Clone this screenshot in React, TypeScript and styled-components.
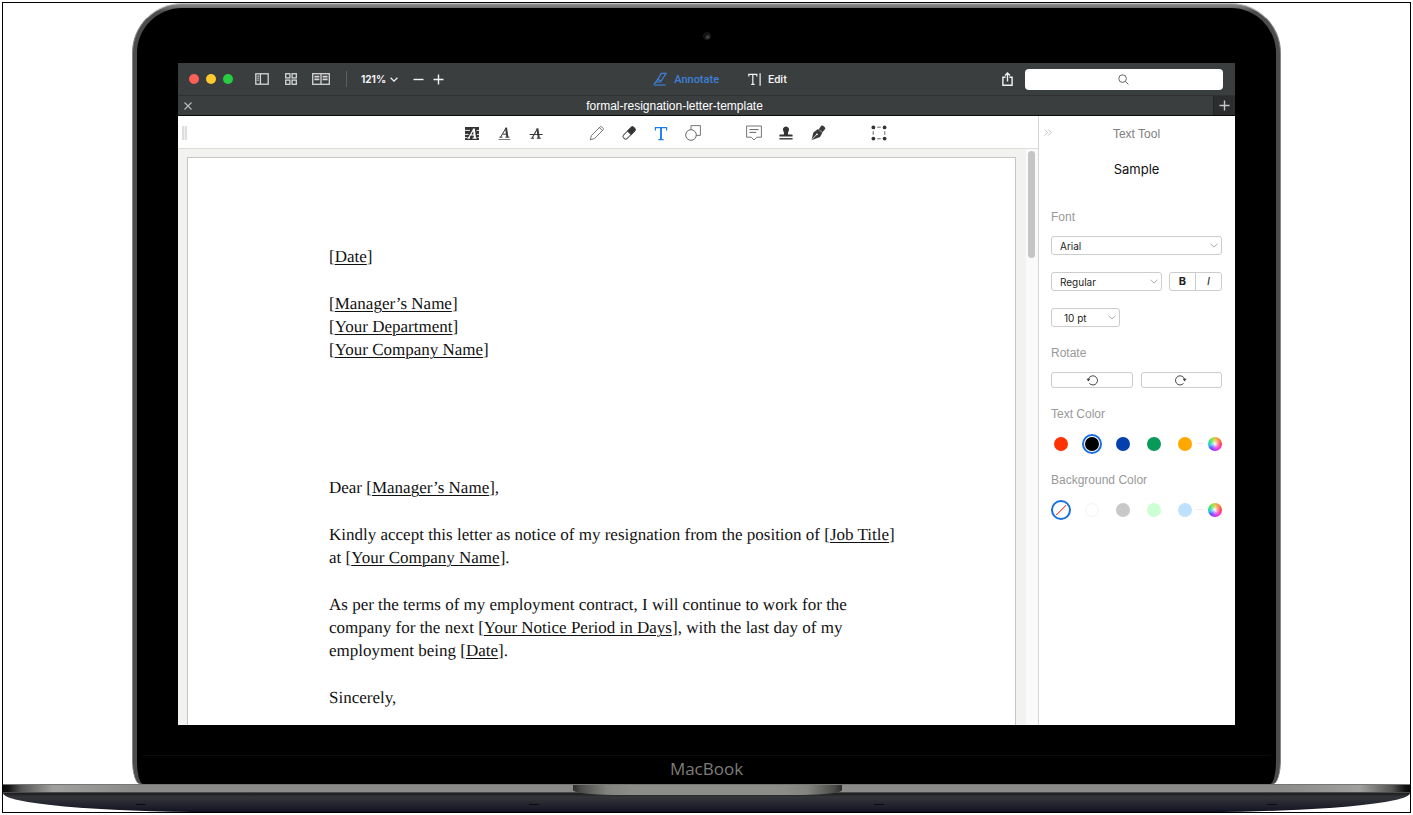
import React from "react";
import styled, { createGlobalStyle, css } from "styled-components";

const GlobalStyle = createGlobalStyle`
  *, *::before, *::after { box-sizing: border-box; }
  body {
    margin: 0;
    background: #fff;
    font-family: Inter, "Liberation Sans", sans-serif;
    font-size: 11px;
    color: #222;
  }
  button, select, input { font: inherit; color: inherit; margin: 0; }
  svg { display: block; }
`;

const Stage = styled.div`
  display: flex;
  flex-direction: column;
  min-height: 100vh;
  padding: 2px 2px 3px;
`;

const Frame = styled.div`
  flex: 1;
  display: flex;
  flex-direction: column;
  border: 1px solid #000;
`;

/* Laptop shell */

const Lid = styled.div`
  flex: 1;
  display: flex;
  margin: 0 129px;
  padding: 4px;
  border: 1px solid #858585;
  border-top-color: #c4c4c4;
  border-bottom: 0;
  border-radius: 50px 50px 8px 8px / 50px 50px 24px 24px;
  padding-bottom: 0;
  background: linear-gradient(#8c8c8c, #4c4c4c 8px);
`;

const Bezel = styled.div`
  flex: 1;
  display: flex;
  flex-direction: column;
  min-width: 0;
  padding: 0 41px;
  border-radius: 45px 45px 6px 6px / 45px 45px 22px 22px;
  background: #000;
`;

const CameraStrip = styled.div`
  display: flex;
  justify-content: center;
  align-items: center;
  height: 55px;
`;

const Camera = styled.span`
  width: 8px;
  height: 8px;
  border: 1px solid #1c1c1c;
  border-radius: 50%;
  background: radial-gradient(circle at 65% 70%, #555, #0c0c0c 60%);
`;

const Chin = styled.div`
  display: flex;
  flex-direction: column;
  height: 59px;
  padding-top: 30px;
  margin: 0 -36px;
`;

const Brand = styled.div`
  flex: 1;
  border-top: 1px solid #0b0b0b;
  text-align: center;
  font-family: "Open Sans", sans-serif;
  font-size: 17px;
  line-height: 26px;
  color: #7d7d7a;
`;

const Base = styled.div`
  position: relative;
  height: 28px;
`;

const Deck = styled.div`
  height: 9px;
  border-top: 1px solid #777775;
  border-bottom: 1px solid #4a4a4a;
  background: linear-gradient(
    90deg,
    #0a0a0a,
    #111 5px,
    #555 18px,
    #a0a09e 50px,
    #8b8b89 130px,
    #8b8b89 calc(100% - 130px),
    #a0a09e calc(100% - 50px),
    #555 calc(100% - 18px),
    #111 calc(100% - 5px),
    #0a0a0a
  );
`;

const Underside = styled.div`
  display: flex;
  justify-content: space-between;
  align-items: flex-end;
  height: 19px;
  padding: 0 133px 7px;
  border-radius: 0 0 210px 210px / 0 0 19px 19px;
  background: linear-gradient(#1c1c1c, #34353a 4px, #1a1a28 16px, #10101e);
`;

const Foot = styled.i<{ $inner?: "left" | "right" }>`
  width: 10px;
  height: 1px;
  background: #0a0a10;
  ${(p) => p.$inner && `margin-${p.$inner}: 48px;`}
`;

const Notch = styled.div`
  position: absolute;
  top: 0;
  left: 50%;
  width: 269px;
  height: 11px;
  margin-left: -134px;
  border-top: 1px solid #777775;
  border-radius: 0 0 40px 40px / 0 0 5px 5px;
  background: linear-gradient(
    90deg,
    #2c2c2c,
    #4c4c4a 8px,
    #82827e 34px,
    #8c8c88 60px,
    #8c8c88 calc(100% - 60px),
    #82827e calc(100% - 34px),
    #4c4c4a calc(100% - 8px),
    #2c2c2c
  );
`;

/* Application window */

const AppWindow = styled.div`
  flex: 1;
  display: flex;
  flex-direction: column;
  min-width: 0;
  background: #fff;
`;

const TitleBar = styled.header`
  display: grid;
  grid-template-columns: 1fr auto 1fr;
  align-items: center;
  height: 33px;
  padding: 0 12px 0 11px;
  border-bottom: 1px solid #2f3132;
  background: #3b3e3f;
  color: #f2f2f2;
`;

const Cluster = styled.div<{ $gap: number; $end?: boolean }>`
  display: flex;
  align-items: center;
  justify-content: ${(p) => (p.$end ? "flex-end" : "flex-start")};
  gap: ${(p) => p.$gap}px;
`;

const IconButton = styled.button<{ $w?: number; $h?: number }>`
  display: flex;
  align-items: center;
  justify-content: center;
  flex: none;
  width: ${(p) => p.$w ?? 16}px;
  height: ${(p) => p.$h ?? 16}px;
  padding: 0;
  border: 0;
  background: none;
  color: inherit;
`;

const TrafficLight = styled.button<{ $color: string }>`
  width: 10px;
  height: 10px;
  padding: 0;
  border: 0;
  border-radius: 50%;
  background: ${(p) => p.$color};
`;

const ViewButtons = styled(Cluster)`
  margin-left: 21px;
  color: #d6d6d6;
`;

const Divider = styled.span`
  width: 1px;
  height: 16px;
  margin-left: 16px;
  background: #5c5f60;
`;

const ZoomButton = styled.button`
  display: flex;
  align-items: center;
  gap: 4px;
  margin-left: 14px;
  padding: 0;
  border: 0;
  background: none;
  font-size: 10px;
  font-weight: 700;
`;

const Stepper = styled(Cluster)`
  margin-left: 14px;
`;

const Modes = styled.nav`
  display: flex;
  gap: 29px;
  padding-left: 28px;
`;

const ModeButton = styled.button<{ $active?: boolean }>`
  display: flex;
  align-items: center;
  gap: 7px;
  padding: 0;
  border: 0;
  background: none;
  font-family: Roboto, sans-serif;
  font-size: 11px;
  font-weight: 500;
  color: ${(p) => (p.$active ? "#3d80d8" : "#f4f4f4")};
`;

const Search = styled.label`
  position: relative;
  display: block;
  width: 198px;
  height: 21px;

  svg {
    position: absolute;
    top: 5px;
    left: 93px;
  }
`;

const SearchInput = styled.input`
  display: block;
  width: 100%;
  height: 100%;
  padding: 0 8px;
  border: 0;
  border-radius: 4px;
  background: #fff;
  color: #222;
`;

const TabBar = styled.div`
  display: flex;
  height: 20px;
  border-bottom: 1px solid #0c0c0c;
  background: #3b3e3f;
  color: #fff;
`;

const CloseTab = styled(IconButton)`
  color: #bdbdbd;
`;

const TabTitle = styled.div`
  flex: 1;
  padding-right: 62px;
  text-align: center;
  font-family: "Liberation Sans", Arial, sans-serif;
  font-size: 12px;
  line-height: 21px;
`;

const NewTab = styled(IconButton)`
  border-left: 1px solid #232525;
  background: #2b2d2e;
  color: #c8c8c8;
`;

const Body = styled.div`
  flex: 1;
  display: flex;
  min-height: 0;
`;

const Workspace = styled.main`
  flex: 1;
  display: flex;
  flex-direction: column;
  min-width: 0;
`;

const Toolbar = styled.div`
  display: flex;
  align-items: center;
  height: 33px;
  padding: 2px 0 0 4px;
  border-bottom: 1px solid #dcdcdb;
  background: #fff;
`;

const Grip = styled.span`
  width: 5px;
  height: 14px;
  border: solid #dedede;
  border-width: 0 2px;
  background: #f0f0f0;
`;

const Tools = styled.div`
  flex: 1;
  display: flex;
  justify-content: center;
  gap: 45px;
  padding-left: 126px;
  color: #3a3a3a;
`;

const Canvas = styled.div`
  flex: 1;
  display: flex;
  background: #f2f2f1;
`;

const Paper = styled.article`
  flex: 1;
  margin: 8px 10px 0 9px;
  padding: 87px 100px 16px 141px;
  border: 1px solid #c6c6c5;
  border-bottom: 0;
  background: #fff;
  font-family: "Liberation Serif", "Times New Roman", serif;
  font-size: 17px;
  line-height: 23px;
  text-rendering: geometricPrecision;
  color: #111;
`;

const Para = styled.p<{ $before?: number }>`
  margin: ${(p) => p.$before ?? 24}px 0 0;

  u {
    text-underline-offset: 2px;
    text-decoration-thickness: 1px;
  }
`;

const ScrollTrack = styled.div`
  width: 12px;
  padding: 2px 3px 0 2px;
  background: #fafafa;
`;

const ScrollThumb = styled.div`
  height: 107px;
  border-radius: 4px;
  background: #c5c5c5;
`;

/* Inspector */

const Panel = styled.aside`
  width: 197px;
  padding: 0 13px 16px 12px;
  border-left: 1px solid #d6d6d6;
  background: #fff;
`;

const PanelHeader = styled.div`
  display: grid;
  grid-template-columns: 16px 1fr 16px;
  align-items: center;
  height: 36px;
  color: #808080;
`;

const PanelTitle = styled.h2`
  margin: 0;
  text-align: center;
  font-family: "Liberation Sans", Arial, sans-serif;
  font-size: 12px;
  font-weight: 400;
`;

const Collapse = styled(IconButton)`
  margin: 0 0 4px -11px;
  color: #bdbdbd;
`;

const Sample = styled.div`
  margin-bottom: 23px;
  text-align: center;
  font-size: 13px;
  line-height: 34px;
  color: #111;
`;

const Section = styled.fieldset`
  min-width: 0;
  margin: 0 0 18px;
  padding: 0;
  border: 0;
`;

const SectionLabel = styled.legend`
  margin-bottom: 11px;
  padding: 0;
  font-family: "Liberation Sans", Arial, sans-serif;
  font-size: 12px;
  line-height: 16px;
  color: #999;
`;

const Row = styled.div`
  display: flex;
  gap: 7px;

  & + & {
    margin-top: 17px;
  }
`;

const SelectWrap = styled.label<{ $w?: number }>`
  position: relative;
  ${(p) => (p.$w ? css`width: ${p.$w}px;` : css`flex: 1;`)}

  svg {
    position: absolute;
    top: 7px;
    right: 4px;
    color: #a8a8a8;
    pointer-events: none;
  }
`;

const Select = styled.select<{ $indent?: number }>`
  display: block;
  width: 100%;
  height: 19px;
  padding: 0 16px 0 ${(p) => p.$indent ?? 8}px;
  border: 1px solid #cccccc;
  border-radius: 3px;
  background: #fff;
  appearance: none;
  font-size: 10px;
  color: #222;
`;

const StyleGroup = styled.div`
  display: flex;
  width: 53px;
  height: 19px;
  border: 1px solid #cccccc;
  border-radius: 3px;
`;

const StyleButton = styled.button<{ $italic?: boolean }>`
  flex: 1;
  padding: 0;
  border: 0;
  border-left: ${(p) => (p.$italic ? "1px solid #cccccc" : "0")};
  background: none;
  font-size: 11px;
  line-height: 17px;
  font-weight: ${(p) => (p.$italic ? 400 : 700)};
  font-style: ${(p) => (p.$italic ? "italic" : "normal")};
`;

const RotateRow = styled(Row)`
  gap: 8px;
`;

const RotateButton = styled.button`
  flex: 1;
  display: flex;
  justify-content: center;
  align-items: center;
  height: 16px;
  padding: 0;
  border: 1px solid #cccccc;
  border-radius: 3px;
  background: #fff;
  color: #444;
`;

const Swatches = styled.div`
  display: flex;
  align-items: center;
  gap: 11px;
  height: 21px;
`;

const Swatch = styled.input<{ $color: string; $outlined?: boolean }>`
  flex: none;
  width: 20px;
  height: 20px;
  border: 3px solid transparent;
  border-radius: 50%;
  background: ${(p) => p.$color} padding-box;
  appearance: none;
  box-shadow: ${(p) => (p.$outlined ? "inset 0 0 0 1px #f4f4f4" : "none")};

  &:checked {
    border: 2px solid #1a6fe0;
    background: ${(p) => p.$color} content-box;
    padding: 1px;
  }
`;

const NoColor = styled(Swatch)`
  &:checked {
    background: linear-gradient(135deg, transparent 47%, #f0503c 48%, #f0503c 53%, transparent 54%) content-box;
  }
`;

const Wheel = styled.button`
  position: relative;
  width: 14px;
  height: 14px;
  margin-left: auto;
  padding: 0;
  border: 0;
  border-radius: 50%;
  background:
    radial-gradient(circle, #fff, rgba(255, 255, 255, 0.3) 35%, transparent 60%),
    conic-gradient(#e8c03c, #ff8040 12%, #ff4050 25%, #ff30c0 37%, #c030ff 50%, #5050ff 62%, #30c0f0 72%, #30e080 82%, #80e83c 92%, #e8c03c);

  &::before {
    content: "";
    position: absolute;
    top: 6px;
    right: 18px;
    width: 8px;
    height: 1px;
    background: #f7ece9;
  }
`;

/* Icons */

type IconProps = { w: number; h: number; sw?: number; children: React.ReactNode };

const Icon = ({ w, h, sw = 1, children }: IconProps) => (
  <svg width={w} height={h} viewBox={`0 0 ${w} ${h}`} fill="none" stroke="currentColor" strokeWidth={sw} aria-hidden="true">
    {children}
  </svg>
);

const SidebarIcon = () => (
  <Icon w={14} h={12} sw={1.3}>
    <rect x="0.8" y="0.8" width="12.4" height="10.4" />
    <path d="M5.4 1v10" />
    <path d="M2.2 3.2h1.8M2.2 5.2h1.8M2.2 7.2h1.8" strokeWidth="1" />
  </Icon>
);

const GridIcon = () => (
  <Icon w={12} h={12} sw={1.3}>
    <rect x="0.7" y="0.7" width="4.2" height="4.2" />
    <rect x="7.1" y="0.7" width="4.2" height="4.2" />
    <rect x="0.7" y="7.1" width="4.2" height="4.2" />
    <rect x="7.1" y="7.1" width="4.2" height="4.2" />
  </Icon>
);

const BookIcon = () => (
  <Icon w={18} h={12} sw={1.3}>
    <rect x="0.7" y="0.7" width="16.6" height="10.6" />
    <path d="M9 1v10" />
    <path d="M2.4 3.4h5M2.4 5h5M2.4 6.6h5M10.6 3.4h5M10.6 5h5M10.6 6.6h5" strokeWidth="1.1" />
  </Icon>
);

const Chevron = ({ sw = 1 }: { sw?: number }) => (
  <Icon w={8} h={5} sw={sw}>
    <path d="M0.6 0.8 4 4.1 7.4 0.8" />
  </Icon>
);

const PlusIcon = () => (
  <Icon w={11} h={11} sw={1.4}>
    <path d="M5.5 0.5v10M0.5 5.5h10" />
  </Icon>
);

const MinusIcon = () => (
  <Icon w={11} h={11} sw={1.4}>
    <path d="M0.5 5.5h10" />
  </Icon>
);

const CloseIcon = () => (
  <Icon w={8} h={8} sw={1.1}>
    <path d="M0.5 0.5l7 7M7.5 0.5l-7 7" />
  </Icon>
);

const AnnotateIcon = () => (
  <Icon w={14} h={14} sw={1.2}>
    <path d="M8.400 1.400h4.600L7.600 10H3z" />
    <path d="M4.400 7.400l3.800 1.600M3 10 1 12" />
    <path d="M0.6 13h12" />
  </Icon>
);

const EditIcon = () => (
  <Icon w={13} h={13} sw={1.2}>
    <path d="M0.8 3.4V1.4h8v2M4.8 1.4v10M3.2 11.4h3.4M12.1 0.2v12.6" />
  </Icon>
);

const ShareIcon = () => (
  <Icon w={11} h={14} sw={1.4}>
    <path d="M3.6 5.2H0.9v8h9.200v-8H7.400" />
    <path d="M5.5 9.600V1.200M3 3.600l2.500-2.500L8 3.600" />
  </Icon>
);

const SearchIcon = () => (
  <Icon w={11} h={11}>
    <circle cx="4.6" cy="4.6" r="3.8" stroke="#666" />
    <path d="M7.4 7.4l3 3" stroke="#666" />
  </Icon>
);

const HighlightIcon = () => (
  <Icon w={14} h={14}>
    <rect width="14" height="13" y="1" fill="#333" stroke="none" />
    <path d="M0 4.4h5M0 8.400h3.600M11.600 4.400H14M12 8.400h2M0 11.600h2M12.600 11.600H14" stroke="#fff" strokeWidth="0.900" />
    <path d="M3.400 12.200 8.800 3M2.400 12.200h2.600M7.600 12.200h4M5 9h4.600" stroke="#fff" strokeWidth="1.200" />
    <path d="M8.800 2.600 10 12.200" stroke="#fff" strokeWidth="2" />
  </Icon>
);

const UnderlineIcon = () => (
  <Icon w={13} h={14}>
    <path d="M2.6 11.200 8 2M4.600 8.200h4.600M1.400 11.200h3M7.400 11.200h4" />
    <path d="M8 1.600 9.400 11.200" strokeWidth="2" />
    <path d="M0.6 13.500h11.800" stroke="#777" />
  </Icon>
);

const StrikeIcon = () => (
  <Icon w={14} h={14}>
    <path d="M3 12.200 8.400 2.800M1.800 12.200h3.200M7.800 12.200h4" strokeWidth="1.100" />
    <path d="M8.400 2.400 9.800 12.200" strokeWidth="2" />
    <path d="M0.6 8.500h13" />
  </Icon>
);

const PencilIcon = () => (
  <Icon w={16} h={16} sw={0.9}>
    <path d="M1.2 14.8 2.4 10.6 11.2 1.8a1 1 0 0 1 1.4 0l1.6 1.6a1 1 0 0 1 0 1.4L5.4 13.6z" stroke="#666" />
    <path d="M10.400 2.600l3 3" stroke="#666" />
  </Icon>
);

const EraserIcon = () => (
  <Icon w={16} h={16} sw={1}>
    <g transform="rotate(-45 8 8)">
      <rect x="0.8" y="5.600" width="14.4" height="5" rx="1.8" fill="#fff" stroke="#555" />
      <path d="M8.4 5.600h5a1.8 1.8 0 0 1 1.8 1.8v1.400a1.8 1.8 0 0 1-1.8 1.8h-5z" fill="#333" />
    </g>
  </Icon>
);

const TextIcon = () => (
  <Icon w={14} h={15} sw={1.2}>
    <path d="M1.4 4.6V1.6h11.2v3M4.4 13.6h5.2" stroke="#1d7bf0" />
    <path d="M7 1.6v12" stroke="#1d7bf0" strokeWidth="1.9" />
  </Icon>
);

const ShapesIcon = () => (
  <Icon w={16} h={16} sw={0.9}>
    <path d="M6 4.400V0.600h9.400v9.800h-4" stroke="#666" />
    <circle cx="6" cy="10" r="5.3" stroke="#555" />
  </Icon>
);

const NoteIcon = () => (
  <Icon w={16} h={16} sw={0.9}>
    <path d="M0.6 1h14.8v11.2h-4.6L8 15l-2.8-2.8H0.6z" stroke="#666" />
    <path d="M3.4 4.6h9.2M3.4 7.4h6.8" stroke="#555" />
  </Icon>
);

const StampIcon = () => (
  <Icon w={14} h={14}>
    <path d="M7 0.6a3 3 0 0 1 2.6 4.6C8.8 6.6 9 7.6 9.2 8.4h3.6c.5 0 .8.3.8.8v1.2H.4V9.200c0-.5.3-.8.8-.8h3.600C5 7.600 5.200 6.600 4.400 5.200A3 3 0 0 1 7 .6z" fill="#333" stroke="none" />
    <path d="M0.400 12.800h13.200" stroke="#333" strokeWidth="1.400" />
  </Icon>
);

const PenIcon = () => (
  <Icon w={16} h={16}>
    <path d="M11.200.8c.8-.6 1.600-.4 2.600.4s1.800 1.800 1.400 2.800l-2.800 3.200-3.600-3z" fill="#3a3a3a" stroke="none" />
    <path d="M8 4l4.400 3.800-2.400 4.200-8.600 3.200L3.400 7.600z" fill="#3a3a3a" stroke="none" />
    <path d="M1.200 15.200 6.400 9.800" stroke="#fff" strokeWidth="0.800" />
    <circle cx="6.900" cy="9.300" r="0.900" fill="#fff" stroke="none" />
  </Icon>
);

const SelectionIcon = () => (
  <Icon w={16} h={16}>
    <g fill="#333" stroke="none">
      <circle cx="2.400" cy="2.400" r="1.900" />
      <circle cx="13.600" cy="2.400" r="1.900" />
      <circle cx="2.400" cy="13.600" r="1.900" />
      <circle cx="13.600" cy="13.600" r="1.900" />
    </g>
    <path d="M6.200 2.200h3.600M6.200 13.800h3.600M2.200 6.200v3.600M13.800 6.200v3.600" stroke="#666" />
  </Icon>
);

const DoubleChevron = () => (
  <Icon w={8} h={7} sw={0.9}>
    <path d="M0.600 0.500l3 3-3 3M4.200 0.500l3 3-3 3" />
  </Icon>
);

const RotateLeftIcon = () => (
  <Icon w={12} h={12}>
    <path d="M2.400 5.400A4.600 4.600 0 1 1 3.400 9.400" />
    <path d="M0.400 4.800h4L2.400 7.600z" fill="currentColor" stroke="none" />
  </Icon>
);

const RotateRightIcon = () => (
  <Icon w={12} h={12}>
    <path d="M9.600 5.400A4.600 4.600 0 1 0 8.600 9.400" />
    <path d="M11.600 4.800h-4L9.600 7.600z" fill="currentColor" stroke="none" />
  </Icon>
);

/* Data */

const lights = [
  { name: "Close window", color: "#fb5f57" },
  { name: "Minimize", color: "#fdcb2e" },
  { name: "Zoom window", color: "#28ce42" },
];

const toolGroups = [
  [
    { name: "Highlight", icon: <HighlightIcon /> },
    { name: "Underline", icon: <UnderlineIcon /> },
    { name: "Strikethrough", icon: <StrikeIcon /> },
  ],
  [
    { name: "Pencil", icon: <PencilIcon /> },
    { name: "Eraser", icon: <EraserIcon /> },
    { name: "Text", icon: <TextIcon /> },
    { name: "Shapes", icon: <ShapesIcon /> },
  ],
  [
    { name: "Note", icon: <NoteIcon /> },
    { name: "Stamp", icon: <StampIcon /> },
    { name: "Signature", icon: <PenIcon /> },
  ],
  [{ name: "Select area", icon: <SelectionIcon /> }],
];

const textColors = [
  { name: "Red", color: "#ff3205" },
  { name: "Black", color: "#000000" },
  { name: "Blue", color: "#043fae" },
  { name: "Green", color: "#079a58" },
  { name: "Orange", color: "#ffa800" },
];

const backgroundColors = [
  { name: "White", color: "#ffffff", outlined: true },
  { name: "Gray", color: "#c8c8c8" },
  { name: "Mint", color: "#ccffd2" },
  { name: "Sky", color: "#bfe1ff" },
];

const Field = ({ children }: { children: React.ReactNode }) => (
  <>
    [<u>{children}</u>]
  </>
);

const Letter = () => (
  <Paper>
    <Para $before={0}><Field>Date</Field></Para>
    <Para>
      <Field>Manager’s Name</Field><br />
      <Field>Your Department</Field><br />
      <Field>Your Company Name</Field>
    </Para>
    <Para $before={115}>Dear <Field>Manager’s Name</Field>,</Para>
    <Para>
      Kindly accept this letter as notice of my resignation from the position of <Field>Job Title</Field><br />
      at <Field>Your Company Name</Field>.
    </Para>
    <Para>
      As per the terms of my employment contract, I will continue to work for the<br />
      company for the next <Field>Your Notice Period in Days</Field>, with the last day of my<br />
      employment being <Field>Date</Field>.
    </Para>
    <Para>Sincerely,</Para>
  </Paper>
);

const Inspector = () => (
  <Panel>
    <PanelHeader>
      <Collapse aria-label="Collapse panel"><DoubleChevron /></Collapse>
      <PanelTitle>Text Tool</PanelTitle>
    </PanelHeader>
    <Sample>Sample</Sample>
    <Section>
      <SectionLabel>Font</SectionLabel>
      <Row>
        <SelectWrap>
          <Select aria-label="Font family"><option>Arial</option></Select>
          <Chevron />
        </SelectWrap>
      </Row>
      <Row>
        <SelectWrap>
          <Select aria-label="Font style"><option>Regular</option></Select>
          <Chevron />
        </SelectWrap>
        <StyleGroup>
          <StyleButton aria-label="Bold">B</StyleButton>
          <StyleButton $italic aria-label="Italic">I</StyleButton>
        </StyleGroup>
      </Row>
      <Row>
        <SelectWrap $w={69}>
          <Select $indent={12} aria-label="Font size"><option>10 pt</option></Select>
          <Chevron />
        </SelectWrap>
      </Row>
    </Section>
    <Section>
      <SectionLabel>Rotate</SectionLabel>
      <RotateRow>
        <RotateButton aria-label="Rotate left"><RotateLeftIcon /></RotateButton>
        <RotateButton aria-label="Rotate right"><RotateRightIcon /></RotateButton>
      </RotateRow>
    </Section>
    <Section>
      <SectionLabel>Text Color</SectionLabel>
      <Swatches>
        {textColors.map((c) => (
          <Swatch key={c.name} type="radio" name="text-color" aria-label={c.name} $color={c.color} defaultChecked={c.name === "Black"} />
        ))}
        <Wheel aria-label="Custom text color" />
      </Swatches>
    </Section>
    <Section>
      <SectionLabel>Background Color</SectionLabel>
      <Swatches>
        <NoColor type="radio" name="background-color" aria-label="None" $color="#fff" defaultChecked />
        {backgroundColors.map((c) => (
          <Swatch key={c.name} type="radio" name="background-color" aria-label={c.name} $color={c.color} $outlined={c.outlined} />
        ))}
        <Wheel aria-label="Custom background color" />
      </Swatches>
    </Section>
  </Panel>
);

export default function App() {
  return (
    <Stage>
      <GlobalStyle />
      <Frame>
        <Lid>
          <Bezel>
            <CameraStrip><Camera /></CameraStrip>
            <AppWindow>
              <TitleBar>
                <Cluster $gap={0}>
                  <Cluster $gap={7}>
                    {lights.map((l) => (
                      <TrafficLight key={l.name} $color={l.color} aria-label={l.name} />
                    ))}
                  </Cluster>
                  <ViewButtons $gap={13}>
                    <IconButton aria-label="Sidebar"><SidebarIcon /></IconButton>
                    <IconButton aria-label="Thumbnails"><GridIcon /></IconButton>
                    <IconButton $w={18} aria-label="Reading view"><BookIcon /></IconButton>
                  </ViewButtons>
                  <Divider />
                  <ZoomButton>121% <Chevron sw={1.3} /></ZoomButton>
                  <Stepper $gap={8}>
                    <IconButton $w={12} aria-label="Zoom out"><MinusIcon /></IconButton>
                    <IconButton $w={12} aria-label="Zoom in"><PlusIcon /></IconButton>
                  </Stepper>
                </Cluster>
                <Modes>
                  <ModeButton $active><AnnotateIcon /> Annotate</ModeButton>
                  <ModeButton><EditIcon /> Edit</ModeButton>
                </Modes>
                <Cluster $gap={10} $end>
                  <IconButton aria-label="Share"><ShareIcon /></IconButton>
                  <Search>
                    <SearchInput type="search" aria-label="Search" />
                    <SearchIcon />
                  </Search>
                </Cluster>
              </TitleBar>
              <TabBar>
                <CloseTab $w={20} $h={19} aria-label="Close tab"><CloseIcon /></CloseTab>
                <TabTitle>formal-resignation-letter-template</TabTitle>
                <NewTab $w={22} $h={19} aria-label="New tab"><PlusIcon /></NewTab>
              </TabBar>
              <Body>
                <Workspace>
                  <Toolbar>
                    <Grip />
                    <Tools>
                      {toolGroups.map((group, i) => (
                        <Cluster key={i} $gap={16}>
                          {group.map((t) => (
                            <IconButton key={t.name} aria-label={t.name}>{t.icon}</IconButton>
                          ))}
                        </Cluster>
                      ))}
                    </Tools>
                  </Toolbar>
                  <Canvas>
                    <Letter />
                    <ScrollTrack><ScrollThumb /></ScrollTrack>
                  </Canvas>
                </Workspace>
                <Inspector />
              </Body>
            </AppWindow>
            <Chin><Brand>MacBook</Brand></Chin>
          </Bezel>
        </Lid>
        <Base>
          <Deck />
          <Underside><Foot /><Foot $inner="left" /><Foot $inner="right" /><Foot /></Underside>
          <Notch />
        </Base>
      </Frame>
    </Stage>
  );
}
